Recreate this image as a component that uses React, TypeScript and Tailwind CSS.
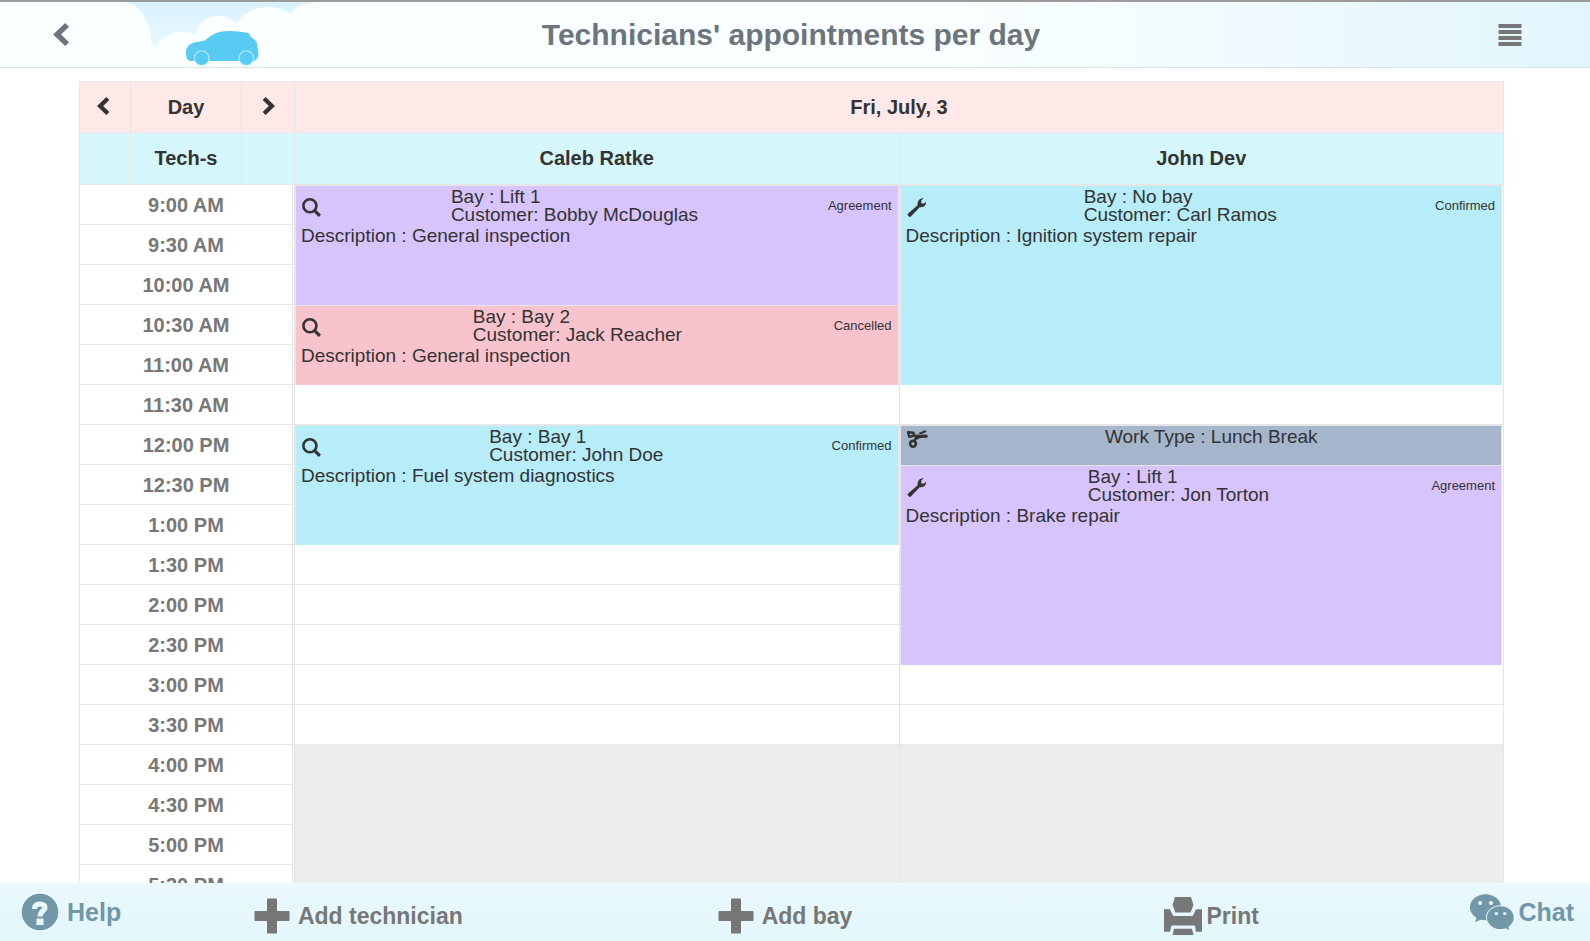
import type { ReactNode } from "react";

type Status = "Agreement" | "Cancelled" | "Confirmed";
type IconName = "search" | "wrench" | "scissors";

interface Appointment {
  start: number;
  slots: number;
  icon: IconName;
  color: string;
  lines: string[];
  status?: Status;
  description?: string;
}

const VIOLET = "bg-[#d8c4fd]";
const ROSE = "bg-[#f8c3cc]";
const CYAN = "bg-[#b6edf9]";
const SLATE = "bg-[#a5b5cb]";

const SLOT_HEIGHT = 40;
const CLOSING_SLOT = 14;

const slots = [
  "9:00 AM", "9:30 AM", "10:00 AM", "10:30 AM", "11:00 AM", "11:30 AM",
  "12:00 PM", "12:30 PM", "1:00 PM", "1:30 PM", "2:00 PM", "2:30 PM",
  "3:00 PM", "3:30 PM", "4:00 PM", "4:30 PM", "5:00 PM", "5:30 PM",
];

const technicians: { name: string; appointments: Appointment[] }[] = [
  {
    name: "Caleb Ratke",
    appointments: [
      { start: 0, slots: 3, icon: "search", color: VIOLET, lines: ["Bay : Lift 1", "Customer: Bobby McDouglas"], status: "Agreement", description: "General inspection" },
      { start: 3, slots: 2, icon: "search", color: ROSE, lines: ["Bay : Bay 2", "Customer: Jack Reacher"], status: "Cancelled", description: "General inspection" },
      { start: 6, slots: 3, icon: "search", color: CYAN, lines: ["Bay : Bay 1", "Customer: John Doe"], status: "Confirmed", description: "Fuel system diagnostics" },
    ],
  },
  {
    name: "John Dev",
    appointments: [
      { start: 0, slots: 5, icon: "wrench", color: CYAN, lines: ["Bay : No bay", "Customer: Carl Ramos"], status: "Confirmed", description: "Ignition system repair" },
      { start: 6, slots: 1, icon: "scissors", color: SLATE, lines: ["Work Type : Lunch Break"] },
      { start: 7, slots: 5, icon: "wrench", color: VIOLET, lines: ["Bay : Lift 1", "Customer: Jon Torton"], status: "Agreement", description: "Brake repair" },
    ],
  },
];

function Chevron({ className, flip = false }: { className: string; flip?: boolean }) {
  return (
    <svg viewBox="0 0 16 22" className={className} fill="currentColor" aria-hidden="true">
      <path d={flip ? "M4.5 0 16 11 4.5 22 .8 18.4 8.4 11 .8 3.6Z" : "M11.5 0 0 11l11.5 11 3.7-3.6L7.6 11l7.6-7.4Z"} />
    </svg>
  );
}

function EventIcon({ name }: { name: IconName }) {
  if (name === "search") {
    return (
      <svg viewBox="0 0 20 20" className="size-5 shrink-0" fill="none" stroke="currentColor" aria-hidden="true">
        <circle cx="8.9" cy="8.7" r="6.5" strokeWidth="2.6" />
        <path d="m13.6 13.6 5.3 5.2" strokeWidth="3.2" />
      </svg>
    );
  }
  if (name === "wrench") {
    return (
      <svg viewBox="0 0 20 20" className="size-5 shrink-0" fill="currentColor" aria-hidden="true">
        <path d="M2.1 16.6 11.6 8.3C11 4.500 13.600.7 17.500 1.200L15.200 3.700l.3 2.700 2.600.1 1.900-1.800c.5 3.800-2.700 6-6.300 5.500L4.600 19.700Q3.600 20.200 2.700 19.300L2 18.500Q1.200 17.600 2.100 16.600Z" />
      </svg>
    );
  }
  return (
    <svg viewBox="0 0 22 18" className="h-[18px] w-[22px] shrink-0" fill="none" stroke="currentColor" aria-hidden="true">
      <path d="M2 2.200 7.500 2.700 7.800 5.700 3.300 6.900Z" strokeWidth="2.400" strokeLinejoin="round" />
      <circle cx="7" cy="13.800" r="2.900" strokeWidth="2.600" />
      <path d="m8.400 11 1.700-3" strokeWidth="2.400" />
      <path fill="currentColor" stroke="none" d="M8.500 4.300 12 4.700l8.500-.2 1.500 1.500-1 1.800-7 .3-2.500 1.400-2.500-.3-.500-2ZM12 3.200 19 .2l1.500.6-.3 1.200-5.200 2.200Z" />
    </svg>
  );
}

function AppointmentCard({ item }: { item: Appointment }) {
  return (
    <div
      className={`flex flex-col border-x border-t border-[#e6e6ea] pl-[5px] pr-[6px] pt-0.5 text-left text-[19px] ${item.color}`}
      style={{ height: item.slots * SLOT_HEIGHT }}
    >
      <div className={item.status ? "flex h-[38px] items-center" : "flex h-[22px] items-center"}>
        <EventIcon name={item.icon} />
        <div className="flex flex-1 justify-center self-start leading-[18px]">
          <div>
            {item.lines.map((line) => (
              <p key={line}>{line}</p>
            ))}
          </div>
        </div>
        {item.status && <span className="pb-0.5 text-[13px]">{item.status}</span>}
      </div>
      {item.description && <p className="leading-5">Description : {item.description}</p>}
    </div>
  );
}

function slotCell(appointments: Appointment[], slot: number, name: string, isLast: boolean) {
  const starting = appointments.find((a) => a.start === slot);
  if (starting) {
    return (
      <td
        key={name}
        rowSpan={starting.slots}
        className={isLast ? "border-l border-[#e6e6e6] p-0 pr-px align-top" : "border-l border-[#e6e6e6] p-0 align-top"}
      >
        <AppointmentCard item={starting} />
      </td>
    );
  }
  if (appointments.some((a) => slot > a.start && slot < a.start + a.slots)) return null;
  return (
    <td
      key={name}
      className={slot >= CLOSING_SLOT ? "border-l border-[#e6e6e6] bg-[#ededed]" : "border-b border-l border-[#e6e6e6]"}
    />
  );
}

function FooterButton({ children, className = "" }: { children: ReactNode; className?: string }) {
  return (
    <button type="button" className={`flex items-center font-bold ${className}`}>
      {children}
    </button>
  );
}

function Plus() {
  return (
    <svg viewBox="0 0 36 36" className="size-9" fill="currentColor" aria-hidden="true">
      <path d="M14 .5h8q1 0 1 1V13h11.5q1 0 1 1v8q0 1-1 1H23v11.5q0 1-1 1h-8q-1 0-1-1V23H1.500q-1 0-1-1v-8q0-1 1-1H13V1.500q0-1 1-1Z" />
    </svg>
  );
}

export default function App() {
  return (
    <div className="flex h-screen flex-col overflow-hidden bg-white font-['Liberation_Sans',Arial,sans-serif] text-[#333]">
      <header className="flex h-[68px] shrink-0 items-center border-b border-t-2 border-b-[#d9e4e8] border-t-[#9b9b9b] bg-linear-to-r from-[#faffff] from-60% to-[#e2f5fd]">
        <div className="flex flex-1 items-center self-stretch">
          <button type="button" aria-label="Back" className="ml-[53px] text-[#6c757d]">
            <Chevron className="h-[23px] w-[17px]" />
          </button>
          <svg viewBox="125 2 194 65" className="ml-[55px] h-[65px] w-[194px]" aria-hidden="true">
            <defs>
              <linearGradient id="sky" x1="0" y1="0" x2="0" y2="1">
                <stop offset="0" stopColor="#daf2fd" />
                <stop offset="1" stopColor="#e9f9fe" />
              </linearGradient>
            </defs>
            <path fill="url(#sky)" d="M127 2C144 7 150 24 153 49 159 40 170 32 182 32q8 0 14 3C198 23 207 16 218 16q12 0 19 8C243 13 255 7 269 7q13 0 22 7C295 7 304 3 315 2Z" />
            <path fill="#59cbf2" d="M190 61c-3-1-4-4-4-8 0-6 3-9 8-10.500l11-2C212 34 219 31 228 31c9 0 15 1 20.500 2l2 3.500 6 5 2 12c0 4-2 6-4.500 7.500Z" />
            <g fill="#59cbf2" stroke="#b9e9fa" strokeWidth="1.300">
              <circle cx="201.700" cy="58" r="7.200" />
              <circle cx="246.300" cy="58" r="7.200" />
            </g>
            <g fill="#59cbf2">
              <circle cx="201.700" cy="58.200" r="6.600" />
              <circle cx="246.300" cy="58.200" r="6.600" />
            </g>
          </svg>
        </div>
        <h1 className="pr-2 text-[30px] font-bold leading-9 text-[#6c757d]">Technicians' appointments per day</h1>
        <div className="flex flex-1 justify-end">
          <button type="button" aria-label="Menu" className="mr-[68px] text-[#777]">
            <svg viewBox="0 0 24 22" className="h-[22px] w-6" fill="currentColor" aria-hidden="true">
              <path d="M.5 0h23v4H.5zM.5 6h23v4H.5zM.5 12h23v4H.5zM.5 18h23v4H.5z" />
            </svg>
          </button>
        </div>
      </header>

      <main className="min-h-0 flex-1 overflow-hidden pl-[79px] pr-[86px] pt-[13px]">
        <table className="w-full table-fixed border-separate border-spacing-0 border-r border-t border-[#e6e6e6] text-center text-xl">
          <colgroup>
            <col className="w-[51px]" />
            <col className="w-[111px]" />
            <col className="w-[53px]" />
            <col />
            <col />
          </colgroup>
          <thead>
            <tr className="h-[51px] bg-[#fee9e8]">
              <th className="border-b border-l border-[#e6e6e6] p-0 pb-0.5">
                <button type="button" aria-label="Previous day" className="block pl-[17px]">
                  <Chevron className="h-[18px] w-[13px]" />
                </button>
              </th>
              <th className="border-b border-l border-[#e6e6e6] p-0">Day</th>
              <th className="border-b border-l border-[#e6e6e6] p-0 pb-0.5">
                <button type="button" aria-label="Next day" className="block pl-5">
                  <Chevron flip className="h-[18px] w-[13px]" />
                </button>
              </th>
              <th colSpan={2} className="border-b border-l border-[#e6e6e6] p-0">Fri, July, 3</th>
            </tr>
            <tr className="h-[52px] bg-[#d5f6fb]">
              <th className="border-b border-l border-[#e6e6e6] p-0" />
              <th className="border-b border-l border-[#e6e6e6] p-0 pb-0.5">Tech-s</th>
              <th className="border-b border-l border-[#e6e6e6] p-0" />
              {technicians.map((tech) => (
                <th key={tech.name} className="border-b border-l border-[#e6e6e6] p-0 pb-0.5">{tech.name}</th>
              ))}
            </tr>
          </thead>
          <tbody>
            {slots.map((label, slot) => (
              <tr key={label} className="h-10">
                <th colSpan={3} scope="row" className="border-b border-l border-[#e6e6e6] p-0 pr-px text-[#777]">
                  <div className="flex h-[39px] items-center justify-center border-r border-[#e6e6e6]">{label}</div>
                </th>
                {technicians.map((tech, i) => slotCell(tech.appointments, slot, tech.name, i === technicians.length - 1))}
              </tr>
            ))}
          </tbody>
        </table>
      </main>

      <footer className="flex h-[58px] shrink-0 items-center bg-linear-to-b from-[#eaf9fe] to-[#e2f6fc] pl-[21px] pr-4 text-[23px] text-[#777]">
        <FooterButton className="w-[124px] gap-2 text-[25px] text-[#7197a8]">
          <svg viewBox="0 0 38 38" className="size-[38px]" aria-hidden="true">
            <circle cx="19" cy="19" r="18.300" fill="#7197a8" />
            <path d="M13.500 16c0-3.500 2-5 5.300-5 3.700 0 5.300 1.500 5.300 4s-5.100 3-5.100 8.500" fill="none" stroke="#eaf9fe" strokeWidth="5" />
            <path fill="#eaf9fe" d="M15.500 25.500h7V32h-7z" />
          </svg>
          <span className="pt-0.5">Help</span>
        </FooterButton>
        <div className="grid flex-1 grid-cols-3 justify-items-center pt-2">
          <FooterButton className="gap-2">
            <Plus />
            Add technician
          </FooterButton>
          <FooterButton className="gap-2">
            <Plus />
            Add bay
          </FooterButton>
          <FooterButton className="gap-1">
            <svg viewBox="0 0 38 38" className="size-[38px]" fill="currentColor" aria-hidden="true">
              <path d="M11 0h16l2.500 8-3 7.500h-15l-3-7.500Z" />
              <path d="M0 12.300h6l3 6.200 1 .5h18l1-.5 3-6.200h6v22.400h-6l-1-6.200H7.500L6 34.700H0Z" />
              <path d="M10 31.700h18l1.500 6.300h-21Z" />
            </svg>
            Print
          </FooterButton>
        </div>
        <FooterButton className="w-[149px] justify-end gap-1 text-[25px] text-[#7197a8]">
          <svg viewBox="0 0 44 36" className="h-9 w-11" fill="#7197a8" aria-hidden="true">
            <ellipse cx="15.500" cy="13.300" rx="15.500" ry="13" />
            <path d="m7 22-1.800 6.300 6.300-3Z" />
            <circle cx="10.200" cy="9" r="2" fill="#eaf9fe" />
            <circle cx="21" cy="9" r="2" fill="#eaf9fe" />
            <ellipse cx="30.300" cy="23.600" rx="13.400" ry="11.400" stroke="#e7f8fd" strokeWidth="1.800" paintOrder="stroke" />
            <path d="m34 33.500 5.200 2.400-1.400-5Z" />
            <circle cx="26.300" cy="19.600" r="1.700" fill="#eaf9fe" />
            <circle cx="34.700" cy="19.600" r="1.700" fill="#eaf9fe" />
          </svg>
          <span className="pt-0.5">Chat</span>
        </FooterButton>
      </footer>
    </div>
  );
}
